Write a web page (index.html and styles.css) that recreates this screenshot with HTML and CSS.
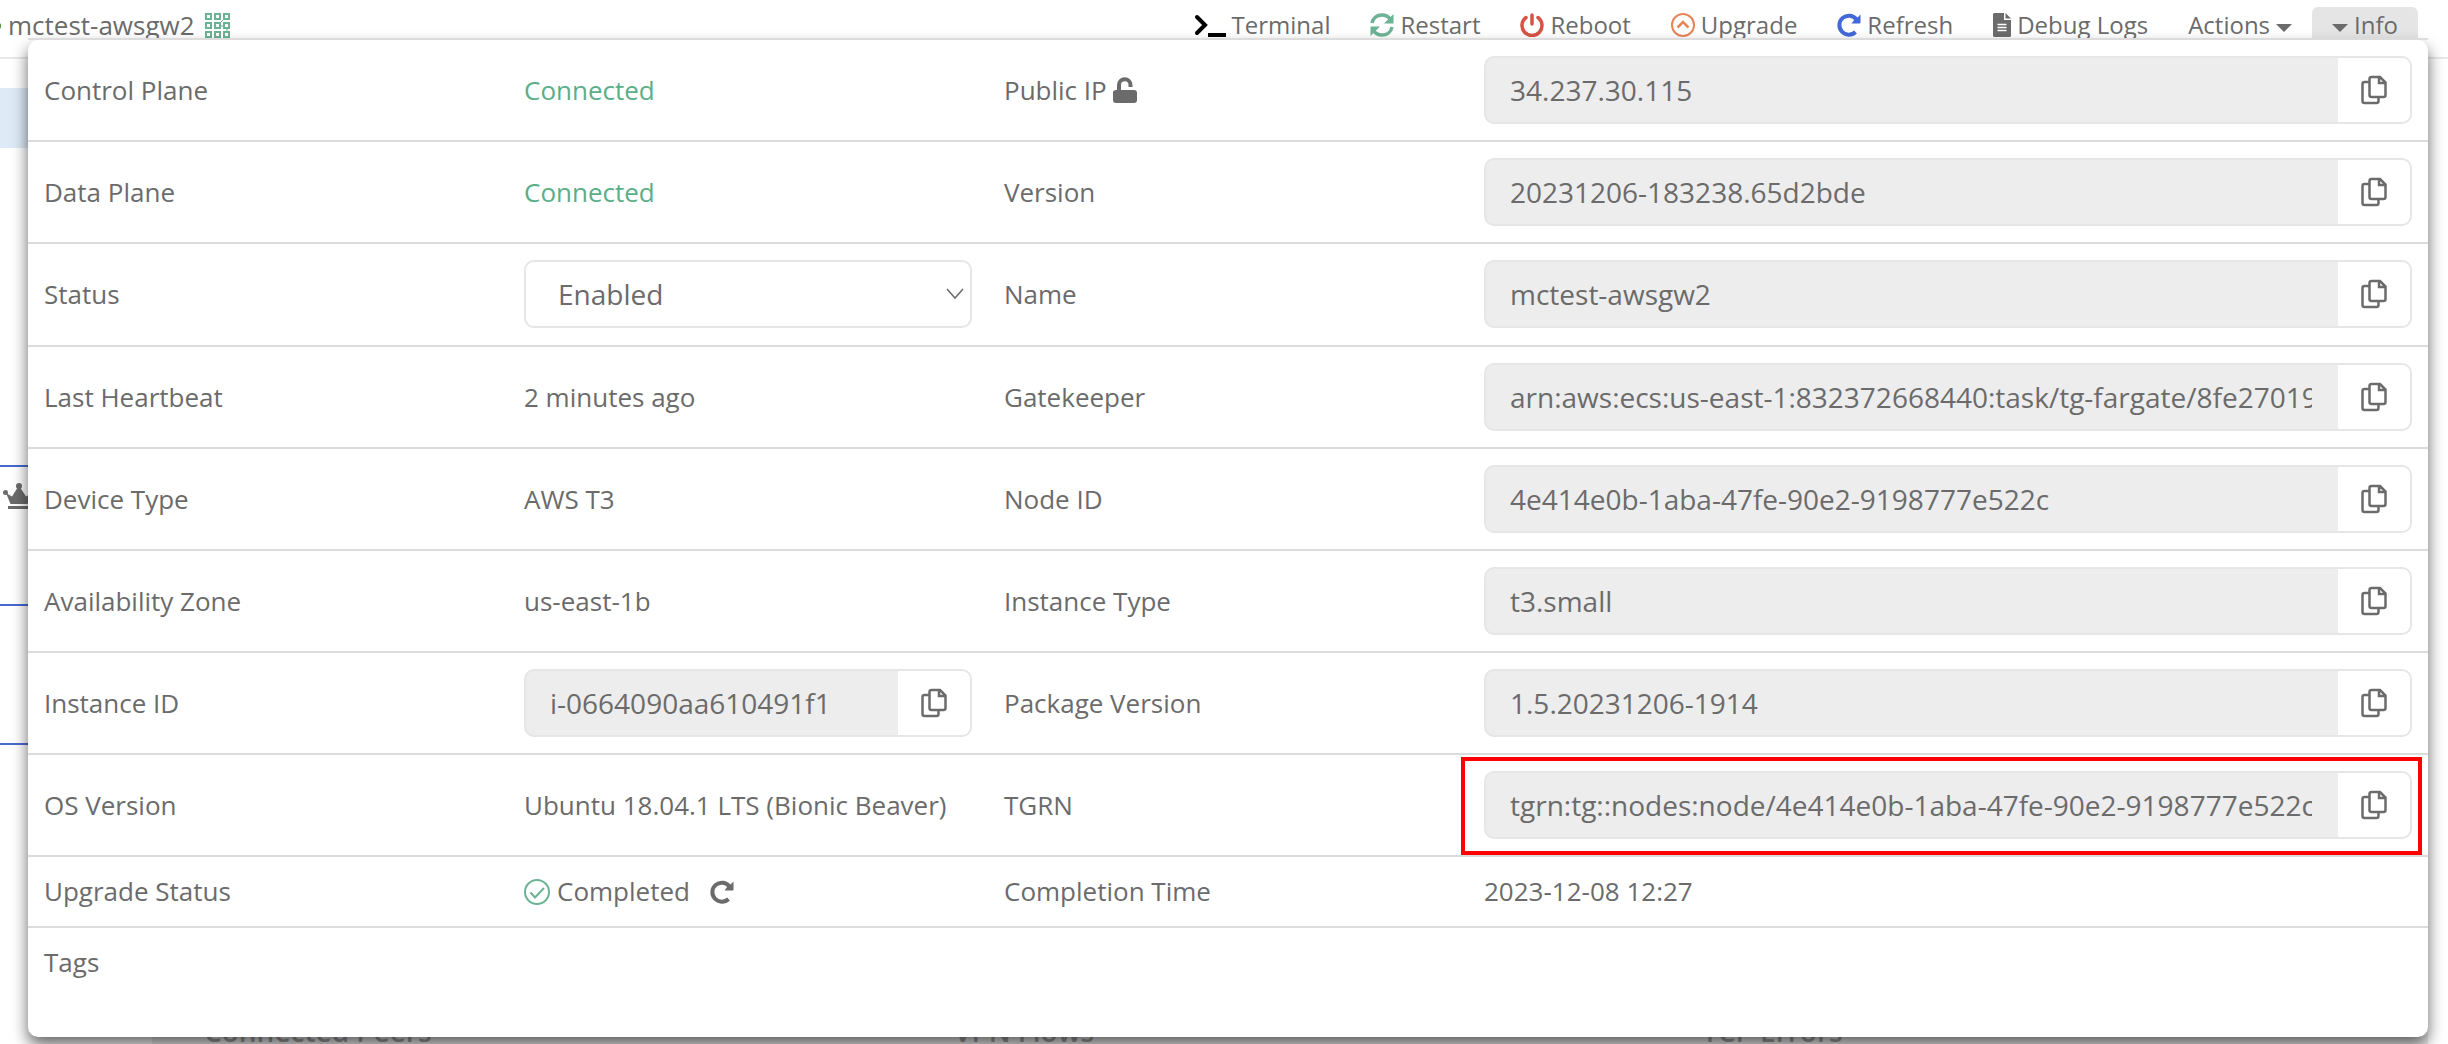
FILE: index.html
```html
<!DOCTYPE html>
<html lang="en">
<head>
<meta charset="utf-8">
<title>mctest-awsgw2</title>
<link rel="stylesheet" href="styles.css">
</head>
<body>
<svg class="sprite" aria-hidden="true">
  <symbol id="copy" viewBox="0 0 26 30"><path d="M8 7H3.500a2 2 0 0 0-2 2v17a2 2 0 0 0 2 2h12a2 2 0 0 0 2-2v-3.500M10.500 2H19l5.500 5.500v12.500a2 2 0 0 1-2 2h-12a2 2 0 0 1-2-2V4a2 2 0 0 1 2-2zM18 2v6h6" fill="none" stroke="currentColor" stroke-width="2.500"/></symbol>
  <symbol id="redo" viewBox="0 0 24 24"><path d="M19.500 6.500A9.500 9.500 0 1 0 18.500 19" fill="none" stroke="currentColor" stroke-width="4"/><path d="M23.500 1.500v8a1 1 0 0 1-1 1h-8l3-4 3-2z" fill="currentColor"/></symbol>
</svg>

<header class="topbar">
  <div class="node">
    <span class="dot"></span>
    <span class="node-name">mctest-awsgw2</span>
    <svg class="grid-icon" viewBox="0 0 26 26"><g fill="none" stroke="#6cb294" stroke-width="2"><path d="M1 1h5v5H1zM10 1h5v5h-5zM19 1h5v5h-5zM1 10h5v5H1zM10 10h5v5h-5zM19 10h5v5h-5zM1 19h5v5H1zM10 19h5v5h-5zM19 19h5v5h-5z"/><path d="M15 10l4-4M15 13h4M22 15v4" stroke-width="1"/></g></svg>
  </div>
  <nav class="actions">
    <button class="action"><svg class="icon wide" viewBox="0 0 32 24"><path d="M3 4l8 8-8 8" fill="none" stroke="#000" stroke-width="4" stroke-linecap="round"/><path d="M14 20h18v4H14z"/></svg>Terminal</button>
    <button class="action"><svg class="icon" viewBox="0 0 24 24" fill="none" stroke="#6cb294" stroke-width="3.500"><path d="M2 10C3 5 7 2 12 2c4 0 6.500 1.500 8.500 4.500M22 14c-1 5-5 8-10 8-4 0-6.500-1.500-8.500-4.500"/><path d="M23.500 1v9.500H14zM.5 23v-9.500H10z" fill="#6cb294" stroke="none"/></svg>Restart</button>
    <button class="action"><svg class="icon" viewBox="0 0 24 24" fill="none" stroke="#d65345" stroke-width="3.500" stroke-linecap="round"><path d="M6 4.500a10 10 0 1 0 12 0M12 2v9"/></svg>Reboot</button>
    <button class="action"><svg class="icon" viewBox="0 0 24 24" fill="none" stroke="#e58558" stroke-width="2"><circle cx="12" cy="12" r="11"/><path d="M6.500 14.500L12 9l5.500 5.500" stroke-width="2.500"/></svg>Upgrade</button>
    <button class="action"><svg class="icon blue"><use href="#redo"/></svg>Refresh</button>
    <button class="action"><svg class="icon file" viewBox="0 0 18 24"><path d="M1.500 0H11v7h7v15.500a1.500 1.500 0 0 1-1.500 1.500h-15A1.500 1.500 0 0 1 0 22.500v-21A1.500 1.500 0 0 1 1.500 0zM12.500 0L18 5.500h-5.500z" fill="#6b6b6b"/><path d="M4.500 11.500h9M4.500 14.500h9M4.500 17.500h9" stroke="#fff" stroke-width="1.500"/></svg>Debug Logs</button>
    <button class="action">Actions<span class="caret"></span></button>
    <button class="action active"><span class="caret"></span>Info</button>
  </nav>
</header>

<main class="stage">
  <aside class="rail">
    <div class="rail-selected"></div>
    <div class="rail-card first"><svg class="crown" viewBox="0 0 32 28" fill="#6b6b6b"><circle cx="2.500" cy="9.500" r="2.500"/><circle cx="16" cy="3" r="3"/><circle cx="29.500" cy="9.500" r="2.500"/><path d="M3 10l6 3.500L15 4h2l6 9.500 6-3.500-4.500 11h-17zM5 23h22v3H5z"/></svg></div>
    <div class="rail-card"></div>
  </aside>

  <section class="panel">
    <table class="info">
      <colgroup><col class="narrow"><col class="narrow"><col class="narrow"><col></colgroup>
      <tbody>
      <tr><th>Control Plane</th><td class="ok">Connected</td>
        <th><label for="ip">Public IP <svg class="lock" viewBox="0 0 24 26" fill="#6b6b6b"><path d="M6 15V8a5.500 5.500 0 0 1 11.500 0v2" fill="none" stroke="#6b6b6b" stroke-width="4"/><rect y="13" width="24" height="13" rx="3"/></svg></label></th>
        <td><div class="field"><input id="ip" readonly value="34.237.30.115"><button aria-label="Copy"><svg><use href="#copy"/></svg></button></div></td></tr>
      <tr><th>Data Plane</th><td class="ok">Connected</td>
        <th><label for="version">Version</label></th>
        <td><div class="field"><input id="version" readonly value="20231206-183238.65d2bde"><button aria-label="Copy"><svg><use href="#copy"/></svg></button></div></td></tr>
      <tr class="tall"><th><label for="status">Status</label></th>
        <td><select id="status"><option>Enabled</option><option>Disabled</option></select></td>
        <th><label for="name">Name</label></th>
        <td><div class="field"><input id="name" readonly value="mctest-awsgw2"><button aria-label="Copy"><svg><use href="#copy"/></svg></button></div></td></tr>
      <tr><th>Last Heartbeat</th><td>2 minutes ago</td>
        <th><label for="gatekeeper">Gatekeeper</label></th>
        <td><div class="field"><input id="gatekeeper" readonly value="arn:aws:ecs:us-east-1:832372668440:task/tg-fargate/8fe27019"><button aria-label="Copy"><svg><use href="#copy"/></svg></button></div></td></tr>
      <tr><th>Device Type</th><td>AWS T3</td>
        <th><label for="node-id">Node ID</label></th>
        <td><div class="field"><input id="node-id" readonly value="4e414e0b-1aba-47fe-90e2-9198777e522c"><button aria-label="Copy"><svg><use href="#copy"/></svg></button></div></td></tr>
      <tr><th>Availability Zone</th><td>us-east-1b</td>
        <th><label for="type">Instance Type</label></th>
        <td><div class="field"><input id="type" readonly value="t3.small"><button aria-label="Copy"><svg><use href="#copy"/></svg></button></div></td></tr>
      <tr><th><label for="instance">Instance ID</label></th>
        <td><div class="field"><input id="instance" readonly value="i-0664090aa610491f1"><button aria-label="Copy"><svg><use href="#copy"/></svg></button></div></td>
        <th><label for="package">Package Version</label></th>
        <td><div class="field"><input id="package" readonly value="1.5.20231206-1914"><button aria-label="Copy"><svg><use href="#copy"/></svg></button></div></td></tr>
      <tr><th>OS Version</th><td>Ubuntu 18.04.1 LTS (Bionic Beaver)</td>
        <th><label for="tgrn">TGRN</label></th>
        <td class="marked"><div class="field"><input id="tgrn" readonly value="tgrn:tg::nodes:node/4e414e0b-1aba-47fe-90e2-9198777e522c"><button aria-label="Copy"><svg><use href="#copy"/></svg></button></div></td></tr>
      <tr><th>Upgrade Status</th>
        <td><div class="state"><svg class="check" viewBox="0 0 26 26" fill="none" stroke="#6cb294" stroke-width="2"><circle cx="13" cy="13" r="12"/><path d="M6.500 13.500l4.500 5 9-9.500"/></svg>Completed<button class="retry" aria-label="Refresh status"><svg><use href="#redo"/></svg></button></div></td>
        <th>Completion Time</th><td>2023-12-08 12:27</td></tr>
      <tr><th>Tags</th><td colspan="3"></td></tr>
      </tbody>
    </table>
  </section>

  <footer class="charts"><h2>Connected Peers</h2><h2>VPN Flows</h2><h2>TCP Errors</h2></footer>
</main>
</body>
</html>
```

FILE: styles.css
```css
* { box-sizing: border-box; }

body {
  margin: 0;
  height: 100vh;
  overflow: hidden;
  background: #fff;
  color: #6b6b6b;
  font: 26px/37px "Open Sans", sans-serif;
}

button, input, select { font: inherit; color: inherit; }
button { border: 0; background: none; padding: 0; cursor: pointer; }
svg { display: block; flex: none; }
.sprite { position: absolute; width: 0; height: 0; }

.topbar {
  display: flex;
  justify-content: space-between;
  align-items: flex-start;
  height: 59px;
  padding: 7px 30px 0 0;
  border-bottom: 2px solid #e8e8e8;
}
.node { display: flex; align-items: center; }
.dot { width: 10px; height: 10px; margin-left: -9px; border-radius: 50%; background: #3a8a1c; }
.node-name { margin: 0 10px 0 7px; }
.grid-icon { width: 26px; height: 26px; }

.actions { display: flex; }
.action {
  display: flex;
  align-items: center;
  gap: 6px;
  height: 40px;
  padding: 0 20px 5px;
  border-radius: 6px 6px 0 0;
  font-size: 24px;
}
.action.active { background: #e5e5e5; }
.icon { width: 24px; height: 24px; }
.icon.wide { width: 32px; }
.icon.file { width: 18px; }
.blue { color: #4169d8; }
.caret { margin-top: 7px; border: 8px solid transparent; border-top-color: #6b6b6b; border-bottom: 0; }

.stage { position: relative; }
.rail { width: 100px; padding-top: 29px; }
.rail-selected { height: 60px; margin-bottom: 317px; background: #deebf7; }
.rail-card { height: 139px; border-bottom: 2px solid #4669d0; }
.rail-card.first { height: 141px; border-top: 2px solid #4669d0; }
.crown { width: 32px; height: 28px; margin: 16px 0 0 3px; }

/* drop-down sheet that covers the page beneath the toolbar */
.panel {
  position: absolute;
  top: -19px;
  left: 28px;
  right: 20px;
  padding-bottom: 40px;
  border-radius: 10px;
  background: #fff;
  box-shadow: 0 8px 16px rgba(0, 0, 0, .6);
}
.panel::before {
  content: "";
  position: absolute;
  inset: -2px 0 auto;
  height: 2px;
  background: #dcdcdc;
}
.info { width: 100%; table-layout: fixed; border-collapse: separate; border-spacing: 0; }
.narrow { width: 20%; }
.info th, .info td {
  padding: 16px;
  border-bottom: 2px solid #dcdcdc;
  font-weight: 400;
  text-align: left;
  vertical-align: middle;
  white-space: nowrap;
}
.info .tall > * { padding-bottom: 17px; }
.info tr:last-child > * { border-bottom: 0; }
.info .ok { color: #5aae88; }
.lock { display: inline-block; width: 24px; height: 26px; vertical-align: -3px; }

.field {
  display: flex;
  height: 68px;
  border: 2px solid #e6e6e6;
  border-radius: 10px;
  background: #ededed;
  overflow: hidden;
}
.field input {
  flex: 1;
  min-width: 0;
  margin: 0 26px 0 24px;
  padding: 0;
  border: 0;
  background: none;
  font-size: 28px;
  outline: 0;
}
.field button {
  display: flex;
  align-items: center;
  justify-content: center;
  width: 72px;
  background: #fff;
}
.field svg { width: 26px; height: 30px; }

select {
  display: block;
  width: 100%;
  height: 68px;
  padding: 0 32px;
  border: 2px solid #e6e6e6;
  border-radius: 10px;
  appearance: none;
  font-size: 28px;
  background: #fff url("data:image/svg+xml,%3Csvg xmlns='http://www.w3.org/2000/svg' width='18' height='12'%3E%3Cpath d='M1 1l8 9 8-9' fill='none' stroke='%236b6b6b' stroke-width='1.500'/%3E%3C/svg%3E") no-repeat right 6px center;
}

.marked { position: relative; }
.marked::after {
  content: "";
  position: absolute;
  inset: 2px 6px 0 -7px;
  border: 4px solid #f00;
  pointer-events: none;
}

.state { display: flex; align-items: center; gap: 7px; }
.check { width: 26px; height: 26px; }
.retry { margin-left: 13px; }
.retry svg { width: 24px; height: 24px; }

/* only the foot of each heading shows past the sheet's lower edge */
.charts {
  display: grid;
  grid-template-columns: 750fr 748fr 726fr;
  margin: 256px 20px 0 152px;
  padding-left: 52px;
  background: #eee;
  color: #a0a0a0;
}
.charts h2 { margin: 0; font-size: 28px; font-weight: 600; line-height: 60px; }
```
